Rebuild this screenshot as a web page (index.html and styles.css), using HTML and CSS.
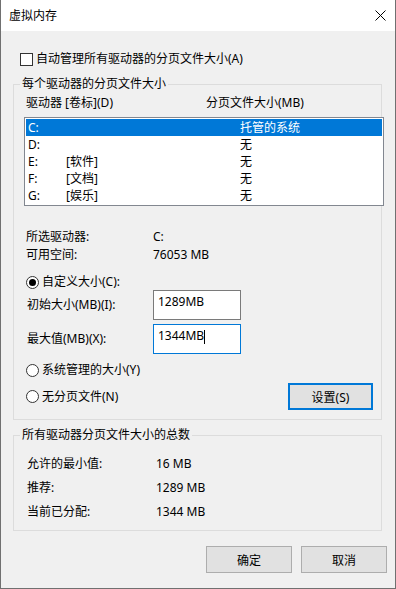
FILE: index.html
```html
<!DOCTYPE html>
<html lang="zh-CN">
<head>
  <meta charset="UTF-8" />
  <title>虚拟内存</title>
  <link rel="stylesheet" href="styles.css">
</head>
<body>
  <div class="window">
    <div class="titlebar">
      <span class="title">虚拟内存</span>
      <svg class="close" width="11" height="11" viewBox="0 0 11 11">
        <path d="M0.5 0.5 L10.5 10.5 M10.5 0.5 L0.5 10.5" stroke="#000" stroke-width="1" fill="none"/>
      </svg>
    </div>

    <div class="content">
      <div class="check-row">
        <span class="checkbox"></span>
        <span>自动管理所有驱动器的分页文件大小(A)</span>
      </div>

      <!-- per drive -->
      <fieldset class="group group-drives">
        <legend>每个驱动器的分页文件大小</legend>
        <div class="list-head">
          <span>驱动器 [卷标](D)</span>
          <span>分页文件大小(MB)</span>
        </div>
        <div class="listbox">
          <div class="list-row selected"><span>C:</span><span></span><span>托管的系统</span></div>
          <div class="list-row"><span>D:</span><span></span><span>无</span></div>
          <div class="list-row"><span>E:</span><span>[软件]</span><span>无</span></div>
          <div class="list-row"><span>F:</span><span>[文档]</span><span>无</span></div>
          <div class="list-row"><span>G:</span><span>[娱乐]</span><span>无</span></div>
        </div>

        <div class="info first"><span>所选驱动器:</span><span>C:</span></div>
        <div class="info"><span>可用空间:</span><span>76053 MB</span></div>

        <div class="radio-row custom">
          <span class="radio checked"></span>
          <span>自定义大小(C):</span>
        </div>
        <div class="edit-row">
          <span class="edit-label">初始大小(MB)(I):</span>
          <div class="edit"><span>1289MB</span></div>
        </div>
        <div class="edit-row second">
          <span class="edit-label">最大值(MB)(X):</span>
          <div class="edit focused"><span>1344MB</span><span class="caret"></span></div>
        </div>
        <div class="radio-row system">
          <span class="radio"></span>
          <span>系统管理的大小(Y)</span>
        </div>
        <div class="set-row">
          <span class="radio"></span>
          <span>无分页文件(N)</span>
          <button class="btn btn-set">设置(S)</button>
        </div>
      </fieldset>

      <!-- totals -->
      <fieldset class="group group-total">
        <legend>所有驱动器分页文件大小的总数</legend>
        <div class="total"><span>允许的最小值:</span><span>16 MB</span></div>
        <div class="total"><span>推荐:</span><span>1289 MB</span></div>
        <div class="total"><span>当前已分配:</span><span>1344 MB</span></div>
      </fieldset>

      <div class="actions">
        <button class="btn">确定</button>
        <button class="btn">取消</button>
      </div>
    </div>
  </div>
</body>
</html>
```

FILE: styles.css
```css
body {
  margin: 0;
  font-family: "Noto Sans", "Noto Sans CJK SC", sans-serif;
  font-size: 12px;
  line-height: 16px;
  color: #000;
}
.window {
  width: 396px;
  height: 589px;
  box-sizing: border-box;
  border: 1px solid #707070;
  border-top: 0;
  background: #f0f0f0;
}
.titlebar {
  height: 31px;
  background: #fff;
  display: flex;
  align-items: center;
  padding-left: 8px;
}
.close {
  margin-left: auto;
  margin-right: 9px;
}
.content {
  padding: 0 13px 0 12px;
}
.check-row {
  display: flex;
  align-items: center;
  padding-top: 20px;
  padding-left: 7px;
  gap: 3px;
}
.checkbox {
  width: 11px;
  height: 11px;
  border: 1px solid #333;
  background: #fff;
}
.group {
  margin: 0;
  border: 1px solid #dcdcdc;
  padding: 3px 8px 9px 12px;
  min-width: 0;
}
.group legend {
  padding: 0 2px;
  margin-left: -6px;
  line-height: 16px;
}
.group-drives {
  margin-top: 9px;
}
.list-head {
  display: grid;
  grid-template-columns: 180px 1fr;
  line-height: 16px;
}
.listbox {
  width: 360px;
  box-sizing: border-box;
  margin: 6px 0 0 -2px;
  border: 1px solid #828790;
  background: #fff;
  padding: 1px;
}
.list-row {
  display: grid;
  grid-template-columns: 38px 174px 1fr;
  height: 17px;
  line-height: 17px;
  padding-left: 2px;
}
.list-row.selected {
  background: #0078d7;
  color: #fff;
}
.info {
  display: grid;
  grid-template-columns: 127px 1fr;
  line-height: 18px;
}
.info.first {
  margin-top: 22px;
}
.radio-row,
.set-row {
  display: flex;
  align-items: center;
  gap: 3px;
}
.radio-row.custom {
  margin-top: 10px;
}
.radio-row.system {
  margin-top: 8px;
}
.set-row {
  margin-top: 5px;
}
.radio {
  width: 11px;
  height: 11px;
  border: 1px solid #333;
  border-radius: 50%;
  background: #fff;
  display: flex;
  align-items: center;
  justify-content: center;
}
.radio.checked::after {
  content: "";
  width: 7px;
  height: 7px;
  border-radius: 50%;
  background: #000;
}
.edit-row {
  display: grid;
  grid-template-columns: 127px 88px;
  align-items: center;
}
.edit-label {
  padding-left: 1px;
}
.edit-row.second {
  margin-top: 4px;
}
.edit {
  height: 30px;
  box-sizing: border-box;
  border: 1px solid #7a7a7a;
  background: #fff;
  padding: 3px 0 0 4px;
  display: flex;
  align-items: flex-start;
}
.edit.focused {
  border-color: #0078d7;
}
.caret {
  width: 1px;
  height: 14px;
  margin-top: 2px;
  background: #000;
}
.btn {
  font-family: inherit;
  font-size: 12px;
  width: 86px;
  height: 27px;
  box-sizing: border-box;
  border: 1px solid #adadad;
  background: #e1e1e1;
  color: #000;
  padding: 0;
}
.btn-set {
  margin-left: auto;
  width: 85px;
  border: 2px solid #0078d7;
}
.group-total {
  margin-top: 7px;
  padding-top: 9px;
  padding-bottom: 6px;
}
.total {
  display: grid;
  grid-template-columns: 129px 1fr;
  line-height: 24px;
  padding-left: 1px;
}
.actions {
  display: flex;
  justify-content: flex-end;
  gap: 9px;
  margin: 15px -5px 0 0;
}
```
